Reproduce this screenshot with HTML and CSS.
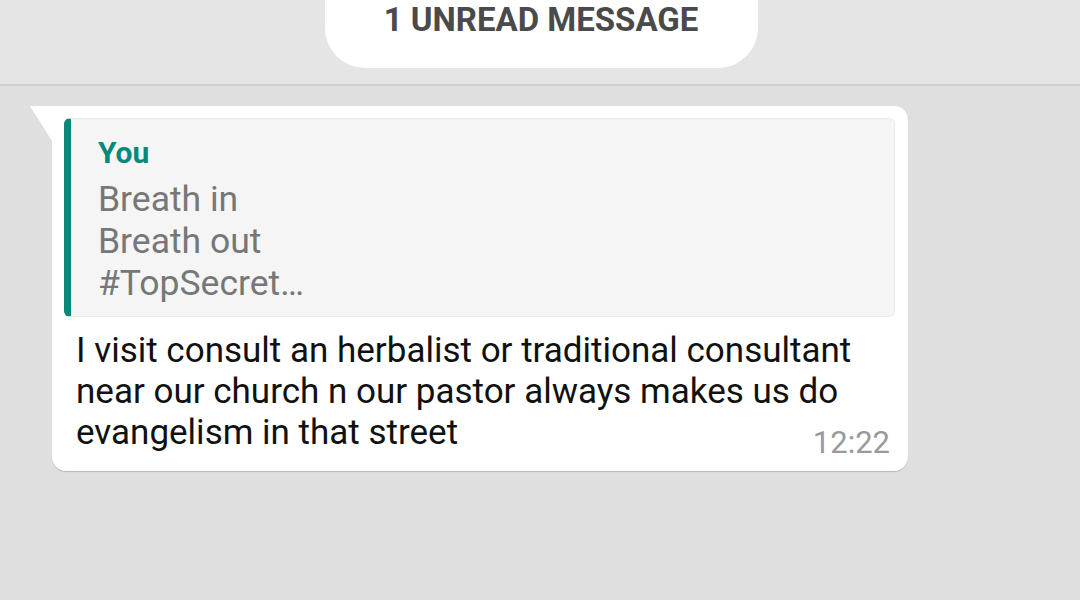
FILE: index.html
```html
<!DOCTYPE html>
<html>
<head>
<meta charset="utf-8">
<link rel="stylesheet" href="styles.css">
</head>
<body>
<div class="banner">
  <div class="pill">1 UNREAD MESSAGE</div>
</div>
<div class="chat">
  <div class="bubble">
    <div class="quote">
      <div class="author">You</div>
      <div class="qtext">Breath in<br>Breath out<br>#TopSecret…</div>
    </div>
    <div class="msg">I visit consult an herbalist or traditional consultant<br>near our church n our pastor always makes us do<br>evangelism in that street</div>
    <div class="time">12:22</div>
  </div>
</div>
</body>
</html>
```
FILE: styles.css
```css
html, body {
  margin: 0;
  padding: 0;
}
body {
  width: 1080px;
  height: 600px;
  overflow: hidden;
  background: #dfdfdf;
  font-family: Roboto, "Noto Sans", sans-serif;
}
.banner {
  height: 84px;
  background: #e5e5e5;
  border-bottom: 2px solid #d0d0d0;
  display: flex;
  justify-content: center;
}
.pill {
  width: 433px;
  height: 68px;
  background: #fff;
  border-radius: 0 0 40px 40px;
  box-sizing: border-box;
  text-align: center;
  font-weight: 700;
  font-size: 33px;
  line-height: 40px;
  color: #4a4a4a;
  margin-left: 2px;
}
.chat {
  padding: 20px 0 0 52px;
}
.bubble {
  position: relative;
  width: 856px;
  box-sizing: border-box;
  background: #fff;
  border-radius: 0 14px 14px 14px;
  padding: 12px 13px 12px 12px;
  box-shadow: 0 1px 1px rgba(0,0,0,0.18);
}
.bubble::before {
  content: "";
  position: absolute;
  left: -22px;
  top: 0;
  width: 0;
  height: 0;
  border-right: 22px solid #fff;
  border-bottom: 35px solid transparent;
}
.quote {
  height: 199px;
  box-sizing: border-box;
  background: #f5f5f5;
  border: 1px solid #e9e9e9;
  border-left: 7px solid #07897a;
  border-radius: 6px;
  padding: 16px 0 0 27px;
}
.author {
  color: #07897a;
  font-weight: 700;
  font-size: 30px;
  line-height: 36px;
}
.qtext {
  color: #777;
  font-size: 35.5px;
  line-height: 42px;
  margin-top: 7px;
}
.msg {
  color: #111;
  font-size: 35px;
  line-height: 41px;
  padding: 13px 20px 0 12px;
}
.time {
  width: fit-content;
  margin-left: auto;
  color: #9a9a9a;
  font-size: 31px;
  line-height: 32px;
  margin-top: -26px;
  margin-right: 5px;
}
```
